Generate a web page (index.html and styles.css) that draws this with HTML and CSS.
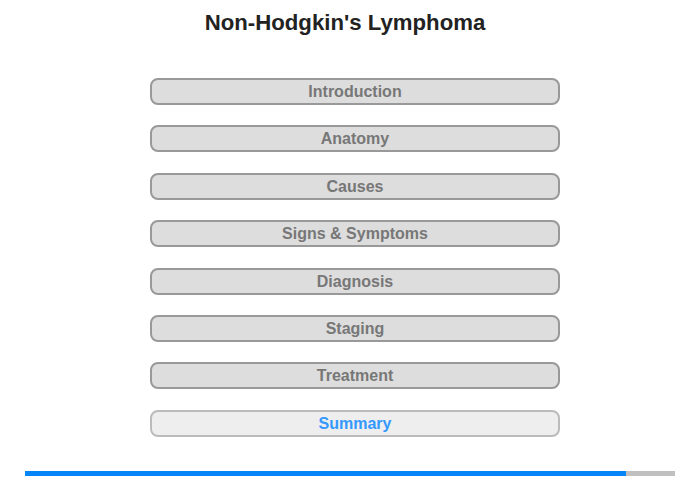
FILE: index.html
```html
<!DOCTYPE html>
<html>
<head>
<meta charset="utf-8">
<link rel="stylesheet" href="styles.css">
</head>
<body>
<div class="page">
  <h1 class="title">Non-Hodgkin's Lymphoma</h1>
  <nav class="menu">
    <div class="item">Introduction</div>
    <div class="item">Anatomy</div>
    <div class="item">Causes</div>
    <div class="item">Signs &amp; Symptoms</div>
    <div class="item">Diagnosis</div>
    <div class="item">Staging</div>
    <div class="item">Treatment</div>
    <div class="item current">Summary</div>
  </nav>
  <div class="progress"><div class="progress-fill" style="width:601px"></div></div>
</div>
</body>
</html>
```
FILE: styles.css
```css
html, body {
  margin: 0;
  padding: 0;
  background: #fff;
}
.page {
  width: 700px;
  height: 480px;
  font-family: "Liberation Sans", Arial, sans-serif;
  display: flex;
  flex-direction: column;
}
.title {
  margin: 0;
  padding-top: 10px;
  height: 78px;
  box-sizing: border-box;
  font-size: 22.2px;
  line-height: 25px;
  font-weight: bold;
  color: #222;
  text-align: center;
  padding-right: 10px;
}
.menu {
  display: flex;
  flex-direction: column;
  gap: 20.4px;
  margin-left: 150px;
  width: 410px;
}
.item {
  box-sizing: border-box;
  height: 27px;
  border: 2px solid #999;
  border-radius: 8px;
  background: #ddd;
  color: #777;
  font-size: 16px;
  font-weight: bold;
  line-height: 23px;
  text-align: center;
}
.item.current {
  border-color: #bbb;
  background: #eee;
  color: #3399ff;
}
.progress {
  margin-top: 34px;
  margin-left: 25px;
  width: 650px;
  height: 5px;
  background: #c0c0c0;
}
.progress-fill {
  height: 100%;
  background: #0585f7;
}
```
